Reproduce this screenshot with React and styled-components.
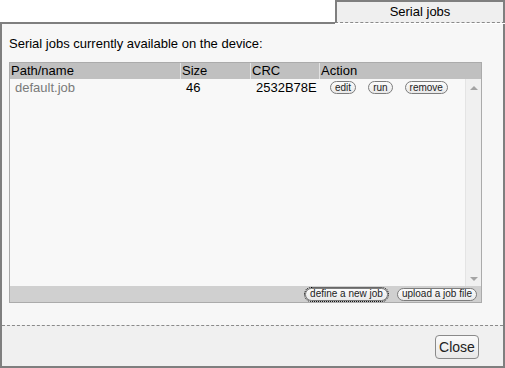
import React from 'react';
import styled, { createGlobalStyle } from 'styled-components';

const Global = createGlobalStyle`
    html, body {
        margin: 0;
        padding: 0;
        background: #ffffff;
    }
    body {
        font-family: "Liberation Sans", Arial, sans-serif;
        font-size: 13px;
        color: #000000;
    }
`

const jobs = [
    { name: 'default.job', size: '46', crc: '2532B78E' },
];

const App = () => {
    return (
        <>
            <Global />
            <Dialog>
                <TabStrip>
                    <TabFiller />
                    <Tab>Serial jobs</Tab>
                </TabStrip>
                <Main>
                    <Content>
                        <Intro>Serial jobs currently available on the device:</Intro>
                        <JobTable>
                            <HeaderRow>
                                <HeadCell>Path/name</HeadCell>
                                <HeadCell $divider>Size</HeadCell>
                                <HeadCell $divider>CRC</HeadCell>
                                <HeadCell $divider>Action</HeadCell>
                            </HeaderRow>
                            <TableBody>
                                <Rows>
                                    {jobs.map((job) => (
                                        <Row key={job.name}>
                                            <Cell $muted>{job.name}</Cell>
                                            <Cell>{job.size}</Cell>
                                            <Cell>{job.crc}</Cell>
                                            <ActionCell>
                                                <PillButton>edit</PillButton>
                                                <PillButton>run</PillButton>
                                                <PillButton>remove</PillButton>
                                            </ActionCell>
                                        </Row>
                                    ))}
                                </Rows>
                                <ScrollTrack>
                                    <Arrow $up />
                                    <Arrow />
                                </ScrollTrack>
                            </TableBody>
                            <TableFooter>
                                <PillButton $focused>define a new job</PillButton>
                                <PillButton>upload a job file</PillButton>
                            </TableFooter>
                        </JobTable>
                    </Content>
                    <Footer>
                        <CloseButton>Close</CloseButton>
                    </Footer>
                </Main>
            </Dialog>
        </>
    )
}

export default App;

const Dialog = styled.div`
    width: 505px;
    height: 368px;
    display: flex;
    flex-direction: column;
    box-sizing: border-box;
`

const TabStrip = styled.div`
    display: flex;
    height: 24px;
`

const TabFiller = styled.div`
    flex: 1;
    border-bottom: 2px solid #7f7f7f;
`

const Tab = styled.div`
    width: 170px;
    height: 23px;
    box-sizing: border-box;
    border: 2px solid #7f7f7f;
    border-bottom: 1px dashed #8a8a8a;
    background: #efefef;
    text-align: center;
    line-height: 19px;
    font-size: 13px;
`

const Main = styled.div`
    flex: 1;
    display: flex;
    flex-direction: column;
    border: 2px solid #7f7f7f;
    border-top: none;
    background: #f7f7f7;
`

const Content = styled.div`
    height: 301px;
    padding: 12px 0 0 7px;
    box-sizing: border-box;
`

const Intro = styled.div`
    height: 15px;
    line-height: 15px;
    margin-bottom: 11px;
`

const JobTable = styled.div`
    width: 473px;
    height: 241px;
    box-sizing: border-box;
    border: 1px solid #ababab;
    display: flex;
    flex-direction: column;
    background: #f8f8f8;
`

const columns = '170px 70px 69px 1fr';

const HeaderRow = styled.div`
    display: grid;
    grid-template-columns: ${columns};
    height: 16px;
    background: #c0c0c0;
`

const HeadCell = styled.div`
    line-height: 16px;
    padding-left: 1px;
    border-left: ${(p) => (p.$divider ? '1px solid #e2e2e2' : 'none')};
`

const TableBody = styled.div`
    flex: 1;
    display: flex;
    min-height: 0;
`

const Rows = styled.div`
    flex: 1;
`

const Row = styled.div`
    display: grid;
    grid-template-columns: ${columns};
    height: 17px;
    align-items: center;
`

const Cell = styled.div`
    padding-left: ${(p) => (p.$muted ? '5px' : '6px')};
    color: ${(p) => (p.$muted ? '#7a7a7a' : '#000000')};
    line-height: 17px;
`

const ActionCell = styled.div`
    display: flex;
    align-items: center;
    gap: 12px;
    padding-left: 11px;
`

const PillButton = styled.button`
    font-family: "Liberation Sans", Arial, sans-serif;
    font-size: 10px;
    line-height: 10px;
    height: 13px;
    padding: 0 4px;
    border: 1px solid #7c7c7c;
    border-radius: 7px;
    background: linear-gradient(#fbfbfb, #e9e9e9);
    color: #222222;
    cursor: pointer;
    outline: ${(p) => (p.$focused ? '1px dotted #000000' : 'none')};
    outline-offset: 0;
`

const ScrollTrack = styled.div`
    width: 15px;
    border-left: 1px solid #e4e4e4;
    background: #f0f0f0;
    display: flex;
    flex-direction: column;
    justify-content: space-between;
    align-items: center;
    padding: 7px 0 5px;
`

const Arrow = styled.div`
    width: 0;
    height: 0;
    border-left: 4px solid transparent;
    border-right: 4px solid transparent;
    border-bottom: ${(p) => (p.$up ? '4px solid #a4a4a4' : 'none')};
    border-top: ${(p) => (p.$up ? 'none' : '4px solid #a4a4a4')};
`

const TableFooter = styled.div`
    height: 16px;
    background: #d0d0d0;
    display: flex;
    justify-content: flex-end;
    align-items: center;
    gap: 9px;
    padding-right: 4px;
`

const Footer = styled.div`
    flex: 1;
    border-top: 1px dashed #8a8a8a;
    background: #f0f0f0;
    display: flex;
    justify-content: flex-end;
    align-items: flex-start;
    padding: 9px 24px 0 0;
`

const CloseButton = styled.button`
    font-family: "Liberation Sans", Arial, sans-serif;
    font-size: 14px;
    width: 44px;
    height: 24px;
    padding: 0;
    border: 1px solid #8a8a8a;
    border-radius: 4px;
    background: linear-gradient(#fafafa, #e8e8e8);
    color: #222222;
    cursor: pointer;
`
